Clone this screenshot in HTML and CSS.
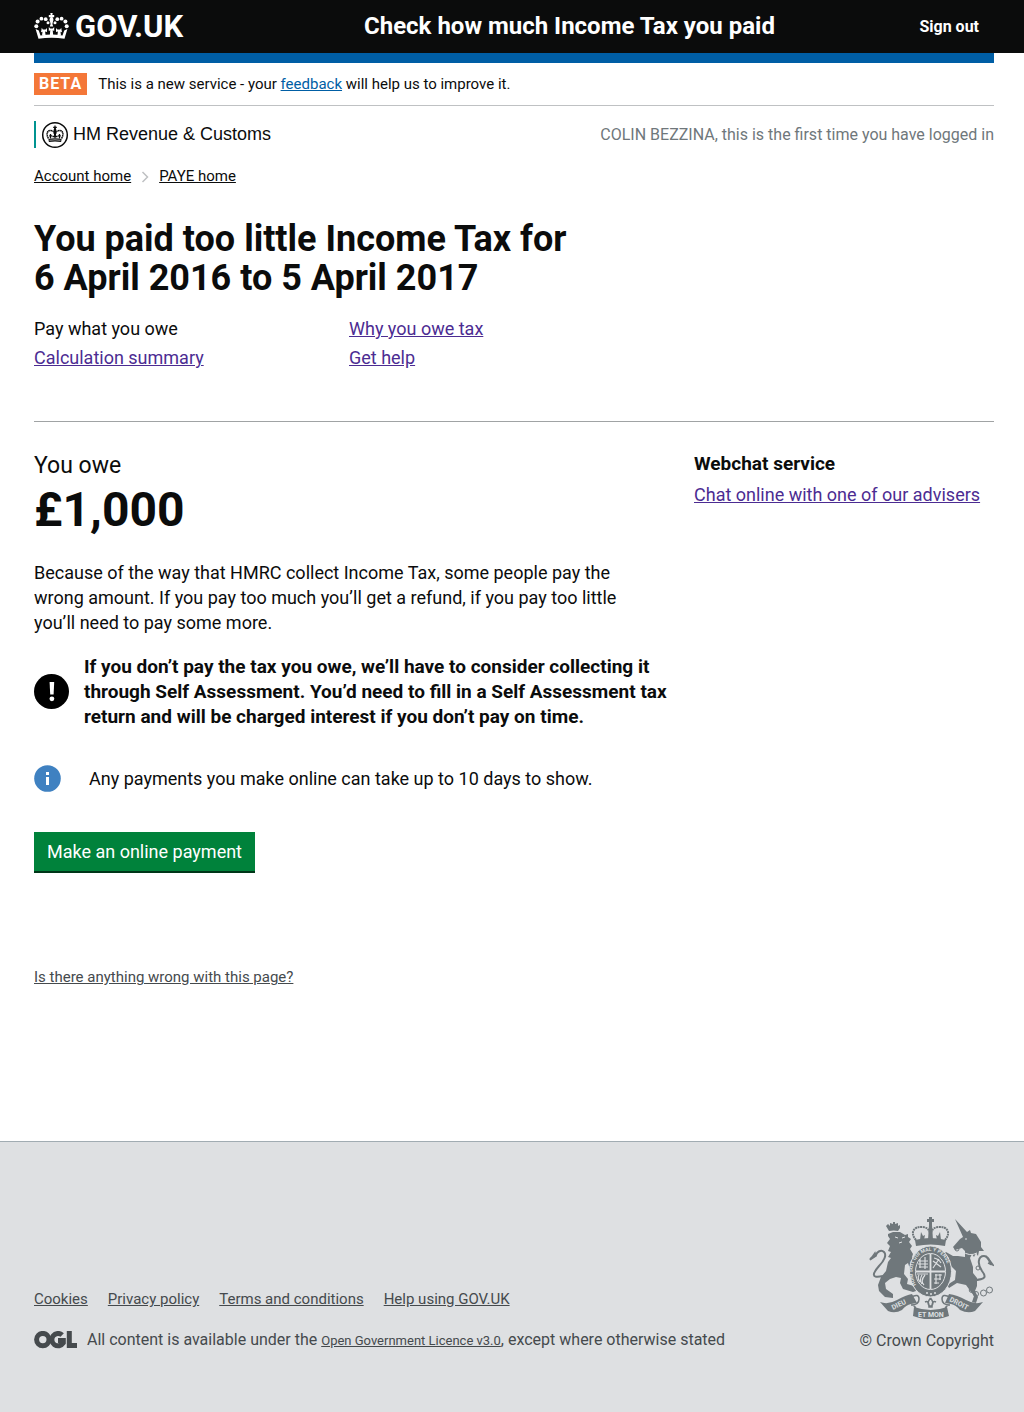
FILE: index.html
```
<!DOCTYPE html>
<html lang="en">
<head>
<meta charset="utf-8">
<title>Check how much Income Tax you paid</title>
<link rel="stylesheet" href="styles.css">
</head>
<body>
<header class="top">
  <div class="wrap top-row">
    <a class="logo" href="#">
      <svg class="crown" viewBox="0 0 35 27" aria-hidden="true">
        <g fill="#fff">
          <circle cx="2.300" cy="13.300" r="2"/><circle cx="3.600" cy="8.600" r="2"/><circle cx="7.400" cy="5.700" r="1.900"/><circle cx="11.700" cy="6.200" r="1.900"/><circle cx="14" cy="9.800" r="1.500"/>
          <circle cx="32.700" cy="13.300" r="2"/><circle cx="31.400" cy="8.600" r="2"/><circle cx="27.600" cy="5.700" r="1.900"/><circle cx="23.300" cy="6.200" r="1.900"/><circle cx="21" cy="9.800" r="1.500"/>
          <path d="M16.300 0h2.400l-.4 2h1.900v2.200h-1.800c1.200 1.200 1.400 2.600.6 4.200l-.6 2.600.8 2.500h-3.400l.8-2.500-.6-2.600c-.8-1.600-.6-3 .6-4.200h-1.800V2h1.900z"/>
          <path d="M1.600 16l3.200 1.500 1.700 4.900q11-2 22 0l1.700-4.900 3.200-1.500-2.900 9.800q-13-2.300-26 0z"/>
          <path d="M14.800 14l1.500 1.600h2.400l1.500-1.600v4l-1.500-.8.5 5h-3.400l.5-5-1.500.8z"/>
          <path d="M7.800 14.800l1 1.800h2.800l1.400-1.600v4l-1.900-.6.5 4H8l.5-3.600-1.500.4zM27.200 14.800l-1 1.800h-2.800L22 15v4l1.900-.6-.5 4H27l-.5-3.600 1.500.4z"/>
        </g>
      </svg>
      <span>GOV.UK</span>
    </a>
    <a class="service" href="#">Check how much Income Tax you paid</a>
    <a class="signout" href="#">Sign out</a>
  </div>
</header>
<div class="wrap">
  <div class="bar"></div>
  <div class="phase"><strong class="tag">BETA</strong><span>This is a new service - your <a href="#">feedback</a> will help us to improve it.</span></div>
  <div class="org-row">
    <div class="org">
      <svg class="seal" viewBox="0 0 28 28" aria-hidden="true">
        <circle cx="14" cy="14" r="12.300" fill="none" stroke="#0b0c0c" stroke-width="1.500"/>
        <path d="M13.400 4.500h1.200v1.200h1.200v1.400h-1l.5 1.700-.5 8h-1.600l-.5-8 .5-1.700h-1V5.700h1.200z" fill="#0b0c0c"/>
        <path d="M7.500 17.500c-2.500-4-1.500-8 1.800-8 2.500 0 4 1.200 4 3.500M20.500 17.500c2.500-4 1.500-8-1.800-8-2.500 0-4 1.200-4 3.500" fill="none" stroke="#0b0c0c" stroke-width="1.500" stroke-dasharray="1.600 .4"/>
        <path d="M9.500 13v4.500M8.200 14.800h3M18.500 13v4.500M16.800 14.800h3M11.500 15.500h5" stroke="#0b0c0c" stroke-width="1.300"/>
        <path d="M7.400 18q6.600-1.500 13.200 0l-.5 3q-6.100-1-12.200 0z" fill="#0b0c0c"/>
        <path d="M8.500 19.300q5.500-1 11 0" fill="none" stroke="#fff" stroke-width=".6"/>
      </svg>
      <span>HM Revenue &amp; Customs</span>
    </div>
    <p class="login">COLIN BEZZINA, this is the first time you have logged in</p>
  </div>
  <nav class="crumbs" aria-label="Breadcrumb">
    <a href="#">Account home</a>
    <svg class="chevron" viewBox="0 0 8 12" aria-hidden="true"><path d="M1.500 1l5 5-5 5" fill="none" stroke="#bfc1c3" stroke-width="1.500"/></svg>
    <a href="#">PAYE home</a>
  </nav>
  <main>
    <h1>You paid too little Income Tax for <br>6 April 2016 to 5 April 2017</h1>
    <ul class="tabs">
      <li>Pay what you owe</li><li><a href="#">Why you owe tax</a></li>
      <li><a href="#">Calculation summary</a></li><li><a href="#">Get help</a></li>
    </ul>
    <div class="columns">
      <div class="content">
        <h2 class="owe">You owe <strong>£1,000</strong></h2>
        <p class="reason">Because of the way that HMRC collect Income Tax, some people pay the <br>wrong amount. If you pay too much you’ll get a refund, if you pay too little <br>you’ll need to pay some more.</p>
        <div class="notice">
          <svg class="warn" viewBox="0 0 35 35" aria-hidden="true"><circle cx="17.500" cy="17.500" r="17.500"/><path d="M15.600 8h4.600l-.6 12.500h-3.400z" fill="#fff"/><circle cx="17.900" cy="24.800" r="2.400" fill="#fff"/></svg>
          <strong>If you don’t pay the tax you owe, we’ll have to consider collecting it <br>through Self Assessment. You’d need to fill in a Self Assessment tax <br>return and will be charged interest if you don’t pay on time.</strong>
        </div>
        <div class="info">
          <svg class="info-icon" viewBox="0 0 27 27" aria-hidden="true"><circle cx="13.500" cy="13.500" r="13.300" fill="#3f81c1"/><path d="M12 7h3v3h-3zM12 12h3v8h-3z" fill="#fff"/></svg>
          <p>Any payments you make online can take up to 10 days to show.</p>
        </div>
        <button class="pay" type="button">Make an online payment</button>
      </div>
      <aside class="aside">
        <h2>Webchat service</h2>
        <a href="#">Chat online with one of our advisers</a>
      </aside>
    </div>
    <a class="report" href="#">Is there anything wrong with this page?</a>
  </main>
</div>
<footer class="footer">
  <div class="wrap footer-row">
    <div>
      <ul class="links"><li><a href="#">Cookies</a></li><li><a href="#">Privacy policy</a></li><li><a href="#">Terms and conditions</a></li><li><a href="#">Help using GOV.UK</a></li></ul>
      <div class="licence">
        <svg class="ogl" viewBox="0 0 43 18" role="img" aria-label="Open Government Licence"><g fill="none" stroke="#454a4d" stroke-width="5"><circle cx="8.800" cy="8.600" r="6.200"/><path d="M28.200 4A6.200 6.200 0 1 0 29.300 12V9.600H24"/><path d="M35.300 0v14.500H43"/></g></svg>
        <p>All content is available under the <a href="#">Open Government Licence v3.0</a>, except where otherwise stated</p>
      </div>
    </div>
    <a class="copyright" href="#">
      <svg class="arms" viewBox="0 0 125 102" aria-hidden="true">
        <g fill="#6f777b">
          <!-- lion -->
          <path d="M20 14l-3-5 2-2 2 2 0-3 3 1 0-2 2 0 0 2 3-1 0 3 2-1 0 3-2 3q-4-1-9 0z"/>
          <path d="M19 17l5-2 7 0 5 3 3-1 0 3 3 2-2 3 3 4-2 3 3 5-1 3 4 5 2 5-2 4-3-3-3 1-2-6-3 2-1 9 4 5-1 5 7 2 2 5-3 1-10-3-3-6 1-5-5-1-6 2-5 4 1 6 7 5 0 4-8-1-6-6-1-6 3-8 5-6 2-9 3-4-3-1 3-5-3-1 2-5-3-3 3-4-2-3z"/>
          <!-- unicorn -->
          <path d="M86 2l12 13 3-2 1 3 5 1 5 8 0 5 3 4-5 0-1 5-2-3-2 4-2-3-2 4 3 9 0 6 4 5 0 8-2 5 3 6-2 6-4-1 2-6-8-11-9-2-8 5-2-3 8-5 1-9-8-8-8 1-1-4 8-1-4-4 3-3 7 4 5 0 7 1 0-6-3-3-7 2-2-3 7-8 3-2z"/>
          <!-- crown -->
          <path d="M60 0h3v2h2v3h-2v3h-3V5h-2V2h2zM46 23q15-4 31 0l-1 6q-14-3-29 0z"/>
          <path d="M60 8h3l1 15h-5zM52 15l2 4 2-1-1 5h-4zM71 15l-2 4-2-1 1 5h4z"/>
        </g>
        <g fill="none" stroke="#6f777b">
          <path d="M47 23c-7-8-1-14 6-13 4 0 7 2 8 6M76 23c7-8 1-14-6-13-4 0-7 2-8 6" stroke-width="2" stroke-dasharray="2 .6"/>
          <path d="M14 59c-13 3-10-3-4-10 5-5 8-11 5-14-3-3-7 0-8 3l-6 4" stroke-width="2"/>
          <path d="M7 39l-6 4 5-7z" stroke-width="1.500"/>
          <path d="M104 63c14 0 13-4 9-9-5-7-4-15 2-15 4 0 5 4 7 9" stroke-width="2"/>
          <path d="M119 41l5 7-5-2" stroke-width="1.500"/>
          <circle cx="88" cy="32" r="2"/><circle cx="86" cy="43" r="2"/><circle cx="109" cy="51" r="2"/>
          <circle cx="102.700" cy="73" r="2.500"/><circle cx="107" cy="77" r="2.500"/><circle cx="114.500" cy="76" r="3"/><circle cx="120.500" cy="73" r="3"/>
        </g>
        <path d="M93 34q7 6 15 2" fill="none" stroke="#dee0e2" stroke-width="1"/>
        <path d="M26 20l3 1M33 21l3-1M30 26l3-1M96 22h2" stroke="#dee0e2" stroke-width="1"/>
        <!-- garter and shield -->
        <ellipse cx="61.500" cy="54.500" rx="21" ry="25.500" fill="#6f777b" stroke="#dee0e2"/>
        <path id="garter" d="M47 68C38 50 48 34 61.500 34S85 50 76 68" fill="none"/>
        <text class="motto"><textPath href="#garter">HONI SOIT QUI MAL Y PENSE</textPath></text>
        <ellipse cx="61.500" cy="54.500" rx="15" ry="18" fill="none" stroke="#dee0e2"/>
        <g stroke="#dee0e2" stroke-width="1.200" fill="none">
          <path d="M61.500 37v35M47 54.500h29" stroke-width="1.800"/>
          <path d="M50 44h9M49 47h10M50 50h9M51 42v9M56 40v12M65 41q5 1 7 5M64 44l8 6M70 42l-6 9M66 58h7M65 62h7M65 66h5M67 57v10M71 57v6"/>
          <path d="M56 58q-5 6-1 10M53 58q-3 5 0 9M50 58q-2 3 1 7M48 57h11"/>
        </g>
        <g fill="#dee0e2"><circle cx="58" cy="76" r="1"/><circle cx="62" cy="77" r="1"/><circle cx="66" cy="76" r="1"/></g>
        <!-- scroll -->
        <path d="M11 85q8 3 17-2t15-6l5 9-6 1q-5 1-9 6-7 4-14 1zM114 85q-8 3-17-2t-17-6l-4 9 6 1q5 1 9 6 8 4 15 1zM45 90q17 6 33 0l2 9q-18 7-36 0z" fill="#6f777b"/>
        <path d="M42 80q8-4 8 2t-8 6q5 0 5 6M81 80q-8-4-8 2t8 6q-5 0-5 6" fill="none" stroke="#6f777b" stroke-width="1.500"/>
        <path d="M61.500 81q4 5 1 8h-2q-3-3 1-8M56 85q4-2 4 5h3q0-7 4-5" fill="none" stroke="#6f777b" stroke-width="1.500"/>
        <text class="scroll" transform="translate(24 93) rotate(-26)">DIEU</text>
        <text class="scroll" x="49" y="100">ET MON</text>
        <text class="scroll" transform="translate(80 84) rotate(27)">DROIT</text>
      </svg>
      <span>© Crown Copyright</span>
    </a>
  </div>
</footer>
</body>
</html>
```
FILE: styles.css
```
*{box-sizing:border-box}
body{margin:0;font-family:Roboto,"Liberation Sans",sans-serif;font-size:18px;line-height:25px;color:#0b0c0c;background:#fff}
h1,h2,p,ul{margin:0;padding:0}
ul{list-style:none}
svg{display:block;flex:none}
.wrap{margin:0 30px 0 34px}
.top{background:#0b0c0c;font-weight:700}
.top a{color:#fff;text-decoration:none}
.top-row{display:grid;grid-template-columns:330px 1fr auto;align-items:center;min-height:53px}
.logo{display:flex;align-items:center;gap:6px;font-size:31px}
.crown{width:35px;height:27px}
.service{font-size:24px}
.signout{font-size:16px;padding-right:15px}
.bar{height:10px;background:#005ea5}
.phase{display:flex;align-items:center;gap:11px;height:43px;border-bottom:1px solid #bfc1c3;font-size:15px}
.phase a{color:#005ea5}
.tag{background:#f47738;color:#fff;font-size:16px;line-height:22px;padding:0 5px;letter-spacing:1px}
.org-row{display:flex;justify-content:space-between;align-items:center;margin-top:15px;font-size:16px}
.org{display:flex;align-items:center;gap:4px;border-left:2px solid #009390;padding-left:5px;height:27px;font-family:"Liberation Sans",Arial,sans-serif;font-size:18px}
.seal{width:28px;height:28px}
.login{color:#6f777b}
.crumbs{display:flex;align-items:center;gap:10px;margin-top:16px;font-size:15px}
.crumbs a{color:#0b0c0c}
.chevron{width:8px;height:12px}
h1{margin-top:31px;font-size:36px;line-height:39px}
.tabs{display:grid;grid-template-columns:315px 1fr;row-gap:4px;margin-top:18px;padding-bottom:51px;border-bottom:1px solid #a0a3a4}
.tabs a,.aside a{color:#4c2c92}
.columns{display:grid;grid-template-columns:1fr 300px;gap:20px;margin-top:29px}
.owe{font-size:23px;line-height:30px;font-weight:400}
.owe strong{display:block;font-size:48px;line-height:58px}
.reason{margin-top:21px}
.notice{display:flex;align-items:center;gap:15px;margin-top:19px;font-size:19px}
.warn{width:35px;height:35px}
.info{display:flex;align-items:center;gap:28px;margin-top:36px}
.info-icon{width:27px;height:27px}
.pay{margin-top:40px;padding:8px 13px;border:0;border-bottom:2px solid #003618;background:#00823b;color:#fff;font:inherit;line-height:23px}
.aside h2{font-size:19px}
.aside a{display:block;margin-top:6px}
.report{display:inline-block;margin-top:92px;font-size:15px;color:#454a4d}
.footer{margin-top:151px;padding:75px 0 59px;border-top:1px solid #a1acb2;background:#dee0e2;color:#454a4d;font-size:16px}
.footer a{color:#454a4d}
.footer-row{display:flex;justify-content:space-between;align-items:flex-end}
.links{display:flex;gap:20px;font-size:15px}
.licence{display:flex;align-items:center;gap:10px;margin-top:15px}
.licence a{font-size:13px}
.ogl{width:43px;height:18px}
.footer .copyright{display:flex;flex-direction:column;align-items:flex-end;gap:9px;text-decoration:none}
.arms{width:125px;height:102px}
.motto{font-size:5px;font-weight:700;fill:#dee0e2}
.scroll{font-size:7px;font-weight:700;fill:#dee0e2}
```
